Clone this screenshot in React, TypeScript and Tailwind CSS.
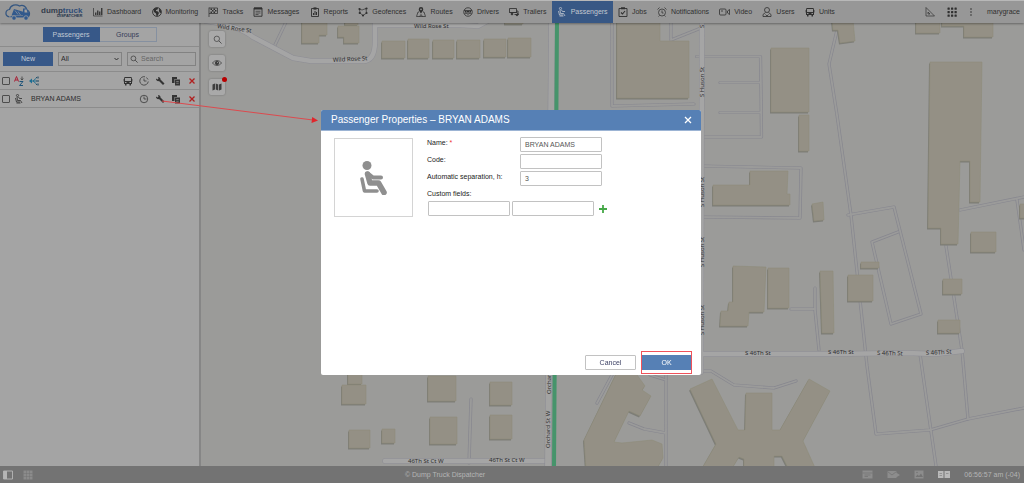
import { useState } from "react";
import type { ReactNode } from "react";

interface IconProps {
  className?: string;
}

interface DrawingProps extends IconProps {
  box?: string;
  children: ReactNode;
}

const Drawing: React.FC<DrawingProps> = ({
  className = "size-[10px]",
  box = "0 0 20 20",
  children,
}) => (
  <svg
    viewBox={box}
    className={`shrink-0 ${className}`}
    fill="none"
    stroke="currentColor"
    strokeWidth="1.8"
    aria-hidden="true"
  >
    {children}
  </svg>
);

// Icons
const ChartIcon = () => (
  <Drawing>
    <path d="M1 2v16h18" strokeWidth="1.4" />
    <path d="M5.5 16v-5M9.500 16V7M13.500 16V9M17.500 16V2" strokeWidth="2.6" />
  </Drawing>
);

const GlobeIcon = () => (
  <Drawing>
    <circle cx="10" cy="10" r="8.800" />
    <path
      d="M3 5l4-3 5 0-1 3-3 1 0 2 4 1 2 3-3 6-2 0-1-5-4-3zM14 3l4 4 0 5-3-1-1-3z"
      fill="currentColor"
      stroke="none"
    />
  </Drawing>
);

const FlagIcon = () => (
  <Drawing>
    <path d="M2 1v19M2 2h17v11H2" strokeWidth="1.500" />
    <path
      d="M5 3h3v3H5zM11 3h3v3h-3zM8 6h3v3H8zM14 6h3v3h-3zM5 9h3v3H5zM11 9h3v3h-3z"
      fill="currentColor"
      stroke="none"
    />
  </Drawing>
);

const MessagesIcon = () => (
  <Drawing>
    <path d="M2 2h16v16.500H2z" />
    <path d="M2 3h16" strokeWidth="4" />
    <path d="M5 8.500h10M5 12h10M5 15h6" strokeWidth="1.400" />
  </Drawing>
);

const ReportsIcon = () => (
  <Drawing>
    <path d="M3 3h14v16H3z" />
    <path d="M7 3h6" strokeWidth="4.500" />
    <path d="M7 16v-4M10 16V8M13 16v-6" strokeWidth="2" />
  </Drawing>
);

const GeofenceIcon = () => (
  <Drawing>
    <path d="M3 4l5 2 8-3 1 9-7 5-6-5z" strokeWidth="1.400" />
    <g fill="currentColor" stroke="none">
      <circle cx="3" cy="4" r="2.200" />
      <circle cx="17" cy="3" r="2.200" />
      <circle cx="17" cy="12" r="2.200" />
      <circle cx="10" cy="17" r="2.200" />
      <circle cx="3.500" cy="12" r="2.200" />
    </g>
  </Drawing>
);

const RouteIcon = () => (
  <Drawing>
    <path d="M6 10H4L1 19h18l-3-9h-2M7 19l3-4 3 4" strokeWidth="1.500" />
    <path
      d="M10 0a4.500 4.500 0 0 1 4.500 4.500C14.500 8 10 13 10 13S5.500 8 5.500 4.500A4.500 4.500 0 0 1 10 0zM10 3a1.700 1.700 0 1 0 0 3.400A1.700 1.700 0 0 0 10 3z"
      fill="currentColor"
      fillRule="evenodd"
      stroke="none"
    />
  </Drawing>
);

const DriverIcon = () => (
  <Drawing>
    <circle cx="10" cy="10" r="8.500" strokeWidth="1.600" />
    <path d="M2 7h16M3 13l4-1 1 2h4l1-2 4 1" strokeWidth="1.600" />
    <path d="M4 8h12v3H4z" fill="currentColor" stroke="none" />
    <path d="M6 9.500h2M12 9.500h2" stroke="#999" strokeWidth="1.200" />
  </Drawing>
);

const TrailerIcon = () => (
  <Drawing>
    <path d="M1 3h14v8H1zM15 8h3v8" strokeWidth="1.700" />
    <path d="M1 11h15l3 4h-8" />
    <circle cx="6" cy="14" r="1.800" fill="currentColor" />
    <circle cx="16" cy="16" r="1.600" fill="currentColor" />
  </Drawing>
);

const SeatIcon: React.FC<IconProps> = ({ className }) => (
  <Drawing className={className} box="0 0 28 34">
    <g strokeLinecap="round" strokeLinejoin="round">
      <circle cx="7" cy="4.500" r="4.500" fill="currentColor" stroke="none" />
      <path d="M7.500 13l2.500 9h8.500l5.500 9.500" strokeWidth="5.500" />
      <path d="M8 12.500l5 4h8" strokeWidth="4" />
      <path d="M2 18l2.500 12h12.500" strokeWidth="3.600" />
    </g>
  </Drawing>
);

const RiderIcon = () => (
  <Drawing>
    <circle cx="7" cy="3" r="2.200" strokeWidth="1.500" />
    <path d="M6 6l1 7h6l3 5M9 6l2 3h5M3 8l2 8h7M5 18h8" strokeWidth="1.600" />
  </Drawing>
);

const JobsIcon = () => (
  <Drawing>
    <path d="M2 3h16v16H2z" />
    <path d="M6 2.500h8" strokeWidth="4" />
    <path d="M6 11l3 3 5-6" strokeWidth="2.200" />
  </Drawing>
);

const AlarmIcon = () => (
  <Drawing>
    <circle cx="10" cy="11" r="7" strokeWidth="1.500" />
    <path d="M10 7v5h3M1 5l4-4M19 5l-4-4M5 17l-2 2M15 17l2 2" strokeWidth="1.500" />
  </Drawing>
);

const VideoIcon = () => (
  <Drawing className="h-[10px] w-[11px]" box="0 0 22 20">
    <rect x="1" y="4" width="13" height="12" rx="2" strokeWidth="1.600" />
    <path d="M4 8h4M17 8l4-3v10l-4-3z" strokeWidth="1.600" />
  </Drawing>
);

const UserIcon = () => (
  <Drawing>
    <circle cx="10" cy="6" r="5" strokeWidth="1.600" />
    <path d="M7 11l-5 4v4h16v-4l-5-4M7 15l3 3 3-3" strokeWidth="1.600" />
  </Drawing>
);

const BusIcon: React.FC<IconProps> = ({ className }) => (
  <Drawing className={className}>
    <path
      d="M3 2h14l1 4v10h-2v3h-3v-3H7v3H4v-3H2V6zM4 4v6h12V4zM4 12v2h3v-2zM13 12v2h3v-2z"
      fill="currentColor"
      fillRule="evenodd"
      stroke="none"
    />
    <path d="M0 6v5M20 6v5" strokeWidth="1.500" />
  </Drawing>
);

const RulerIcon = () => (
  <Drawing>
    <path d="M2 1l17 17H2zM6 10l4 4H6z" strokeWidth="1.400" />
  </Drawing>
);

const AppsIcon = () => (
  <Drawing>
    <g fill="currentColor" stroke="none">
      {[1, 8, 15].map((y) =>
        [1, 8, 15].map((x) => (
          <rect key={`${x}-${y}`} x={x} y={y} width="4.500" height="4.500" rx="1" />
        ))
      )}
    </g>
  </Drawing>
);

const DotsIcon = () => (
  <Drawing className="h-[10px] w-1" box="0 0 8 20">
    <g fill="currentColor" stroke="none">
      <circle cx="4" cy="4" r="1.600" />
      <circle cx="4" cy="10" r="1.600" />
      <circle cx="4" cy="16" r="1.600" />
    </g>
  </Drawing>
);

const ClockIcon: React.FC<{ open?: boolean }> = ({ open }) => (
  <Drawing>
    {open ? (
      <path d="M12 1.500A8.500 8.500 0 1 0 18.500 11M15 3l3 4" strokeWidth="1.500" />
    ) : (
      <circle cx="10" cy="10" r="7.500" strokeWidth="1.500" />
    )}
    <path d="M10 5v5h5" strokeWidth="1.500" />
  </Drawing>
);

const WrenchIcon = () => (
  <Drawing>
    <path
      d="M6 2a4.500 4.500 0 0 1 5 5l8 8-3 3-8-8a4.500 4.500 0 0 1-6-5l3 2 2-2z"
      fill="currentColor"
      stroke="none"
    />
  </Drawing>
);

const CopyIcon = () => (
  <Drawing>
    <path d="M2 2h10v4H7v8H2z" fill="currentColor" stroke="none" />
    <path d="M8 7h10v12H8z" fill="currentColor" stroke="none" />
    <path d="M10.500 11h5M10.500 14.500h5" stroke="#a3a3a3" strokeWidth="1.200" />
  </Drawing>
);

const CrossIcon: React.FC<IconProps> = ({ className }) => (
  <Drawing className={className}>
    <path d="M5 5l10 10M15 5L5 15" strokeWidth="2.600" />
  </Drawing>
);

const SearchIcon: React.FC<IconProps> = ({ className }) => (
  <Drawing className={className}>
    <circle cx="8.500" cy="8.500" r="6" strokeWidth="1.600" />
    <path d="M13 13l6 6" strokeWidth="1.800" />
  </Drawing>
);

const EyeIcon = () => (
  <Drawing>
    <path d="M1 10c4-6.500 14-6.500 18 0-4 6.500-14 6.500-18 0z" strokeWidth="1.500" />
    <circle cx="10" cy="10" r="3.500" fill="currentColor" />
    <circle cx="11" cy="9" r="1" fill="#a8a8a8" stroke="none" />
  </Drawing>
);

const LayersIcon = () => (
  <Drawing>
    <path
      d="M1 5l5-2v12l-5 2zM7.500 3l5 2v12l-5-2zM14 5l5-2v12l-5 2z"
      fill="currentColor"
      stroke="none"
    />
  </Drawing>
);

const SortIcon = () => (
  <Drawing className="h-[10px] w-[11px]" box="0 0 22 20">
    <path d="M1 11L5 1l4 10M2.500 8h5" stroke="#a81f35" strokeWidth="2" />
    <path d="M11 11h7l-7 8h7" stroke="#1f5378" strokeWidth="2" />
    <path d="M16 1v6M13.500 5l2.500 3 2.500-3" stroke="#333" strokeWidth="1.500" />
  </Drawing>
);

const TreeIcon = () => (
  <Drawing>
    <path d="M3 10h5M8 10l7-6M8 10h7M8 10l7 6" stroke="#1d6d92" strokeWidth="1.800" />
    <path d="M0 10l6-5v10z" fill="#1d6d92" stroke="none" />
    <path d="M14 3h2M14 10h2M14 17h2M18 1v4M18 8v4M18 15v4" stroke="#28516b" strokeWidth="2.400" />
  </Drawing>
);

const LogoIcon = () => (
  <svg viewBox="0 0 52 36" className="h-[18px] w-[26px]" fill="none" aria-hidden="true">
    <path
      d="M9 28C-1 26 0 14 9 13 11 4 22 1 29 6c7-3 14 1 14 8 8 2 8 13 0 15"
      stroke="#345681"
      strokeWidth="2.500"
    />
    <path d="M13 25l5-13 20 6v7zM36 11h8l4 9v8H36z" fill="#32598c" />
    <path d="M39 13h4l2 6h-6z" fill="#a1a1a1" />
    <path d="M11 26h36v3H11z" fill="#32598c" />
    <path d="M20 15l6 8M26 17l5 7" stroke="#a1a1a1" strokeWidth="1.300" />
    <g fill="#32598c" stroke="#a1a1a1" strokeWidth="1.500">
      <circle cx="18" cy="30" r="4.500" />
      <circle cx="42" cy="30" r="4.500" />
    </g>
  </svg>
);

const navItems = [
  { label: "Dashboard", icon: <ChartIcon /> },
  { label: "Monitoring", icon: <GlobeIcon /> },
  { label: "Tracks", icon: <FlagIcon /> },
  { label: "Messages", icon: <MessagesIcon /> },
  { label: "Reports", icon: <ReportsIcon /> },
  { label: "Geofences", icon: <GeofenceIcon /> },
  { label: "Routes", icon: <RouteIcon /> },
  { label: "Drivers", icon: <DriverIcon /> },
  { label: "Trailers", icon: <TrailerIcon /> },
  { label: "Passengers", icon: <RiderIcon />, active: true },
  { label: "Jobs", icon: <JobsIcon /> },
  { label: "Notifications", icon: <AlarmIcon /> },
  { label: "Video", icon: <VideoIcon /> },
  { label: "Users", icon: <UserIcon /> },
  { label: "Units", icon: <BusIcon /> },
];

const Header = () => (
  <header className="relative z-10 flex h-[23px] shrink-0 items-stretch border-t border-[#b8b8b8] bg-[#979797] text-[#303030] shadow-[0_1px_2px_rgba(0,0,0,0.35)]">
    <a href="#home" className="flex w-[88px] shrink-0 items-center gap-[10px] pl-[5px]">
      <LogoIcon />
      <span className="flex flex-col items-end font-bold">
        <span className="text-[8px] leading-[7px] text-[#2f4d78]">
          <span className="text-[#333d4c]">dump</span>truck
        </span>
        <span className="text-[4px] leading-[4px] text-[#27364c]">DISPATCHER</span>
      </span>
    </a>
    <nav className="flex w-[752px] items-stretch justify-between">
      {navItems.map((item) => (
        <a
          key={item.label}
          href={`#${item.label.toLowerCase()}`}
          className={`flex items-center gap-1 px-[5px] ${
            item.active ? "bg-[#385885] text-[#c4c9d0]" : ""
          }`}
        >
          {item.icon}
          {item.label}
        </a>
      ))}
    </nav>
    <div className="ml-auto flex items-center gap-3 pr-1">
      <button type="button" aria-label="Tools">
        <RulerIcon />
      </button>
      <button type="button" aria-label="Apps">
        <AppsIcon />
      </button>
      <button type="button" aria-label="More">
        <DotsIcon />
      </button>
      <a href="#account" className="pl-[2px]">
        marygrace
      </a>
    </div>
  </header>
);

const Sidebar = () => (
  <aside className="relative z-[1] w-[201px] shrink-0 border-r-2 border-[#868686] bg-[#a4a4a4] text-[#2c2c2c]">
    <div className="flex h-6 items-center justify-center border-b border-[#8c8c8c]">
      <button type="button" className="h-[15px] w-[57px] bg-[#375888] text-[#c0c8d3]">
        Passengers
      </button>
      <button
        type="button"
        className="h-[15px] w-[57px] border border-l-0 border-[#8590a0] text-[#343b58]"
      >
        Groups
      </button>
    </div>
    <div className="flex h-[25px] items-center gap-[5px] border-b border-[#8c8c8c] px-[3px]">
      <button type="button" className="h-[14px] w-[50px] bg-[#375888] text-[#c0c8d3]">
        New
      </button>
      <div className="relative">
        <select
          aria-label="Filter"
          className="h-[14px] w-16 appearance-none border border-[#828282] px-[2px]"
        >
          <option>All</option>
        </select>
        <svg
          viewBox="0 0 10 6"
          className="pointer-events-none absolute top-[5px] right-[3px] h-[4px] w-[5px]"
          fill="none"
          stroke="#333"
          strokeWidth="2"
        >
          <path d="M1 1l4 4 4-4" />
        </svg>
      </div>
      <label className="flex h-[14px] min-w-0 flex-1 items-center gap-[3px] border border-[#828282] px-[2px]">
        <SearchIcon className="size-2" />
        <input
          type="search"
          aria-label="Search"
          placeholder="Search"
          className="w-full min-w-0 placeholder:text-[#666]"
        />
      </label>
    </div>
    <div className="flex h-[18px] items-center border-b border-[#8c8c8c] px-[2px]">
      <input
        type="checkbox"
        aria-label="Select all"
        className="size-2 appearance-none rounded-[1px] border border-[#4d4d4d]"
      />
      <span className="ml-1 flex gap-1">
        <SortIcon />
        <TreeIcon />
      </span>
      <span className="ml-auto flex gap-[6px] text-[#333]">
        <BusIcon />
        <ClockIcon open />
        <WrenchIcon />
        <CopyIcon />
        <CrossIcon className="size-[10px] text-[#b01f1f]" />
      </span>
    </div>
    <div className="flex h-[18px] items-center border-b border-[#8c8c8c] px-[2px]">
      <input
        type="checkbox"
        id="passenger"
        className="size-2 appearance-none rounded-[1px] border border-[#4d4d4d]"
      />
      <label htmlFor="passenger" className="ml-1 flex items-center gap-[7px]">
        <RiderIcon />
        BRYAN ADAMS
      </label>
      <span className="ml-auto flex gap-[6px] text-[#333]">
        <ClockIcon />
        <WrenchIcon />
        <CopyIcon />
        <CrossIcon className="size-[10px] text-[#b01f1f]" />
      </span>
    </div>
  </aside>
);

const paths = [
  "M700 137h61.500l-.5-47-.5-33.500h-64M720 82.500h41M720 112.500h41",
  "M700 166l101 2-1 50-101-1",
  "M612 22v84l82-2M671 22v18l30-12",
  "M837 30l-8 34 8 51 14 100 16 151 9 68 54-4 38-11 56-11",
  "M848 215l46-8 27 107-30 10-19-82 26-10",
  "M815 288v22l4 40M791 309h23",
  "M946 246l16 104 6 69M960 210l64-13M1017 200l7 50M920 354l16 112",
  "M700 371h11l23 14 40 3 22-7",
  "M666 375v91M612 375l-15 28M629 423l15 6 22 4M650 375l16 5",
  "M471 399l-2 64",
  "M286 22l-11 23",
];

const streets = [
  "M206 21c20 3 36 7 47 16l40 21 18 3h52c10 0 12-11 12-20V22M375 25h85l18 1 15-8",
  "M385 461h163",
  "M701 354h130l75-1 30 1 26-3",
  "M702 22l-1 350",
];

const buildings = [
  "M302 20H327V35H319V43H302z",
  "M345 20H358V25H345z",
  "M338 26H359V43H344V37H338z",
  "M382 41H405V58H382z",
  "M408 39H429V58H408z",
  "M433 40H454V58H433z",
  "M457 40H480V58H457z",
  "M484 39H506V57H484z",
  "M508 38H531V57H508z",
  "M505 20H523V24H505z",
  "M617 20H660V41H689V98H617z",
  "M771 48H809V112H771z",
  "M799 115H809V151H799z",
  "M832 20H853L855 41L840 43L838 30H833z",
  "M916 20H940V33H916z",
  "M942 20H993V37H964V26H942z",
  "M930 62H982L980 202H970V161H960L958 244H941V228H928z",
  "M971 232H996V252H971z",
  "M1020 204H1028V218H1020z",
  "M750 171H788L787 194H790V205H713V185H750z",
  "M812 204L823 202L824 220L814 221z",
  "M733 266L766 267L764 312H749L748 326H720L721 311H728L729 302H733z",
  "M768 268H789V308H768z",
  "M820 271H833L834 333H822z",
  "M848 275H873V301H848z",
  "M861 262H879V268H861z",
  "M943 279H962V294H943z",
  "M938 320H960V333H938z",
  "M690 389L712 379L738 430H745L746 393H772V430H780L809 379L830 391L803 441L816 470H789L782 456H774V470H744V459L739 457L731 470H701L716 444z",
  "M617 372H635L645 386L642 390L651 396L640 416L629 411L614 442L622 443L652 440L662 444L663 458L656 470H586L584 440z",
  "M348 370H362V384H348z",
  "M342 385H366V404H342z",
  "M428 376H456V401H428z",
  "M490 382H512V405H490z",
  "M349 430H370V448H349z",
  "M382 429H395V443H382z",
  "M430 417H457V444H430z",
  "M490 415H512V439H490z",
];

const streetNames = [
  { text: "Wild Rose St", x: 217, y: 28, turn: 8 },
  { text: "Wild Rose St", x: 333, y: 62, turn: -3 },
  { text: "Wild Rose St", x: 414, y: 28, turn: 0 },
  { text: "46Th St Ct W", x: 408, y: 463, turn: 0 },
  { text: "46Th St Ct W", x: 489, y: 462, turn: 0 },
  { text: "S 46Th St", x: 745, y: 355, turn: 0 },
  { text: "S 46Th St", x: 828, y: 354, turn: 0 },
  { text: "S 46Th St", x: 877, y: 355, turn: 1 },
  { text: "S 46Th St", x: 926, y: 355, turn: -3 },
  { text: "Orchard St W", x: 550, y: 448, turn: -90 },
  { text: "Orchard St W", x: 551, y: 394, turn: -90 },
  { text: "S Huson St", x: 704, y: 97, turn: -90 },
  { text: "S", x: 704, y: 28, turn: -90 },
  { text: "S Huson St", x: 704, y: 207, turn: -90 },
  { text: "S Huson St", x: 704, y: 267, turn: -90 },
  { text: "S Huson St", x: 704, y: 335, turn: -90 },
];

const CityMap = () => (
  <svg
    viewBox="201 23 823 443"
    preserveAspectRatio="xMinYMin slice"
    className="absolute inset-0 size-full"
  >
    <g fill="none" strokeLinejoin="round" strokeLinecap="round">
      {paths.map((d) => (
        <path key={d} d={d} stroke="#87878f" strokeWidth="3.200" />
      ))}
      {paths.map((d) => (
        <path key={d} d={d} stroke="#9b9b9a" strokeWidth="1.800" />
      ))}
      {streets.map((d) => (
        <path key={d} d={d} stroke="#8e8e95" strokeWidth="5.500" />
      ))}
      {streets.map((d) => (
        <path key={d} d={d} stroke="#a5a5a5" strokeWidth="4.500" />
      ))}
      <path d="M552 20l-4 450" stroke="#8a8a93" strokeWidth="7" />
      <path d="M552 20l-4 450" stroke="#a3a3a2" strokeWidth="6" />
      <path d="M557 20l-3 450" stroke="#46946b" strokeWidth="4" />
    </g>
    {buildings.map((d) => (
      <g key={d}>
        <path d={d} fill="#7d7d77" transform="translate(-1 1.500)" />
        <path d={d} fill="#949085" stroke="#8d8a76" strokeWidth="0.500" />
      </g>
    ))}
    <g fill="#2e2e2e" fontFamily="Noto Sans" fontSize="6">
      {streetNames.map(({ text, x, y, turn }) => (
        <text key={`${x}-${y}`} transform={`translate(${x} ${y}) rotate(${turn})`}>
          {text}
        </text>
      ))}
    </g>
  </svg>
);

const mapButton =
  "flex size-4 items-center justify-center rounded-[2px] bg-[#a9a9a9] text-[#3d3d3d] shadow-[0_0_2px_rgba(0,0,0,0.3)]";

const MapPanel = () => (
  <section className="relative min-w-0 flex-1 overflow-hidden bg-[#9b9b99]">
    <CityMap />
    <div className="absolute top-2 left-2 flex flex-col gap-2">
      <button type="button" aria-label="Find" className={mapButton}>
        <SearchIcon className="size-[9px]" />
      </button>
      <button type="button" aria-label="Visibility" className={mapButton}>
        <EyeIcon />
      </button>
      <button type="button" aria-label="Layers" className={`relative ${mapButton}`}>
        <LayersIcon />
        <span className="absolute -top-[2px] -right-[2px] size-[5px] rounded-full bg-[#b80000]" />
      </button>
    </div>
  </section>
);

const Footer = () => (
  <footer className="relative flex h-[17px] shrink-0 items-center justify-center bg-[#737373] text-[#b5b5b5]">
    <div className="absolute left-[3px] flex gap-[10px]">
      <button type="button" aria-label="Panel">
        <Drawing>
          <path d="M1 2h18v16H1z" />
          <path d="M1 2h7v16H1z" fill="currentColor" stroke="none" />
        </Drawing>
      </button>
      <button type="button" aria-label="Grid" className="text-[#8b8b8b]">
        <Drawing>
          <path d="M1 1h18v18H1z" fill="currentColor" stroke="none" />
          <path d="M7 1v18M13 1v18M1 7h18M1 13h18" stroke="#737373" strokeWidth="1" />
        </Drawing>
      </button>
    </div>
    <span className="pr-[134px]">© Dump Truck Dispatcher</span>
    <div className="absolute right-[4px] flex items-center gap-[14px] text-[#8d8d8d]">
      <button type="button" aria-label="Log">
        <Drawing className="h-[9px] w-[11px]" box="0 0 22 18">
          <path d="M1 1h20v16H1z" fill="currentColor" stroke="none" />
          <path d="M1 6h20M5 10h12M5 13h7" stroke="#737373" strokeWidth="1.500" />
        </Drawing>
      </button>
      <button type="button" aria-label="Mail">
        <Drawing className="h-[9px] w-[13px]" box="0 0 26 18">
          <path d="M1 2h18v14H1zM18 5l8 5-8 5z" fill="currentColor" stroke="none" />
          <path d="M1 3l9 7 9-7" stroke="#737373" strokeWidth="1.500" />
        </Drawing>
      </button>
      <button type="button" aria-label="Images">
        <Drawing className="h-[9px] w-[10px]" box="0 0 20 18">
          <path d="M1 1h18v16H1z" fill="currentColor" stroke="none" />
          <path d="M3 14l4-5 3 3 4-5 4 7z" fill="#737373" stroke="none" />
          <circle cx="6" cy="5" r="1.500" fill="#737373" stroke="none" />
        </Drawing>
      </button>
      <button type="button" aria-label="Panels" className="text-[#bababa]">
        <Drawing className="h-[9px] w-3" box="0 0 24 18">
          <path d="M0 2h11v14H0zM13 2h11v14H13z" fill="currentColor" stroke="none" />
          <path d="M3 7h5M3 11h5M16 7h5" stroke="#858585" strokeWidth="1.500" />
        </Drawing>
      </button>
      <time className="text-[#b5b5b5]">06:56:57 am (-04)</time>
    </div>
  </footer>
);

const field =
  "h-[15px] w-[82px] rounded-[1px] border border-[#c2c2c2] bg-white px-1 text-[#555]";

const PassengerDialog = () => {
  const [name, setName] = useState("BRYAN ADAMS");
  const [code, setCode] = useState("");
  const [separation, setSeparation] = useState("3");

  const rows = [
    { id: "name", label: "Name:", value: name, onChange: setName, required: true },
    { id: "code", label: "Code:", value: code, onChange: setCode },
    {
      id: "separation",
      label: "Automatic separation, h:",
      value: separation,
      onChange: setSeparation,
    },
  ];

  return (
    <div className="pointer-events-none fixed inset-0 z-20 flex items-center justify-center pt-[2px] pr-[2px]">
      <div
        role="dialog"
        aria-labelledby="dialog-title"
        className="pointer-events-auto flex min-h-[265px] w-[380px] flex-col rounded-[2px] bg-white text-[#222]"
      >
        <div className="flex h-[21px] items-center justify-between rounded-t-[2px] border-b border-[#9cb4d4] bg-[#5680b5] pr-2 pl-[10px] text-white">
          <h1 id="dialog-title" className="text-[10px]">
            Passenger Properties – BRYAN ADAMS
          </h1>
          <button type="button" aria-label="Close">
            <svg
              viewBox="0 0 20 20"
              className="size-[10px]"
              fill="none"
              stroke="currentColor"
              strokeWidth="2.500"
            >
              <path d="M4 4l12 12M16 4L4 16" />
            </svg>
          </button>
        </div>
        <div className="flex flex-1 gap-[14px] px-[13px] pt-[6px]">
          <div className="mt-px flex size-[79px] items-center justify-center border border-[#d4d4d4] text-[#8f8f8f]">
            <SeatIcon className="h-[34px] w-7" />
          </div>
          <div className="flex flex-col gap-[2px]">
            {rows.map((row) => (
              <div key={row.id} className="flex">
                <label htmlFor={row.id} className="w-[93px] leading-[11px]">
                  {row.label} {row.required && <span className="text-[#e33]">*</span>}
                </label>
                <input
                  id={row.id}
                  value={row.value}
                  onChange={(e) => row.onChange(e.target.value)}
                  className={field}
                />
              </div>
            ))}
            <label htmlFor="field-name" className="leading-[11px]">
              Custom fields:
            </label>
            <div className="flex items-center gap-[2px] pl-px">
              <input id="field-name" className={field} />
              <input aria-label="Custom field value" className={field} />
              <button type="button" aria-label="Add field" className="ml-[2px] text-[#45a847]">
                <Drawing>
                  <path d="M10 2v16M2 10h16" strokeWidth="3.600" />
                </Drawing>
              </button>
            </div>
          </div>
        </div>
        <div className="flex justify-end gap-[6px] px-[10px] pb-[5px]">
          <button
            type="button"
            className="h-[15px] w-[51px] rounded-[1px] border border-[#c2c2c2] text-[#3e4266]"
          >
            Cancel
          </button>
          <button type="button" className="relative h-[15px] w-[49px] bg-[#5680b5] text-white">
            OK
            <span className="absolute -inset-x-px -inset-y-1 border border-[#f0525a]" />
          </button>
        </div>
      </div>
    </div>
  );
};

// Leads from the row's wrench to the dialog it opens
const Pointer = () => (
  <svg
    viewBox="0 0 158 24"
    className="pointer-events-none absolute top-[100px] left-[161px] z-20 h-6 w-[158px]"
    fill="none"
    aria-hidden="true"
  >
    <path d="M1 1l151 19" stroke="#dc4a4e" strokeWidth="1" />
    <path d="M157 20.500l-6.500 2.500 .700-6z" fill="#e0262c" />
  </svg>
);

export default function App() {
  return (
    <div className="relative flex h-screen flex-col overflow-hidden font-['Liberation_Sans',Arial,sans-serif] text-[7px] leading-[10px]">
      <Header />
      <main className="flex min-h-0 flex-1">
        <Sidebar />
        <MapPanel />
      </main>
      <Footer />
      <Pointer />
      <PassengerDialog />
    </div>
  );
}
